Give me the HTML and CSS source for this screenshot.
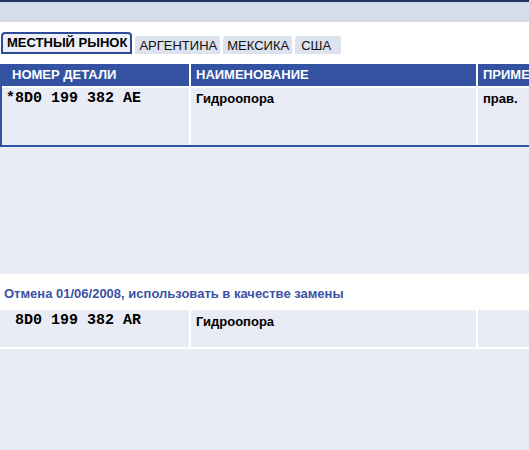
FILE: index.html
```html
<!DOCTYPE html>
<html lang="ru">
<head>
    <meta charset="UTF-8">
    <meta name="viewport" content="width=device-width, initial-scale=1.0">
    <title>Поиск деталей</title>
    <link rel="stylesheet" href="styles.css">
</head>
<body>
    <!-- Top band -->
    <div class="top-band"></div>

    <!-- Market tabs -->
    <nav class="tabs">
        <span class="tab active">МЕСТНЫЙ РЫНОК</span>
        <span class="tab">АРГЕНТИНА</span>
        <span class="tab">МЕКСИКА</span>
        <span class="tab last">США</span>
    </nav>

    <!-- Current part -->
    <div class="result">
        <div class="grid head">
            <div class="cell">НОМЕР ДЕТАЛИ</div>
            <div class="cell">НАИМЕНОВАНИЕ</div>
            <div class="cell">ПРИМЕ</div>
        </div>
        <div class="grid row tall">
            <div class="cell part">*8D0 199 382 AE</div>
            <div class="cell">Гидроопора</div>
            <div class="cell">прав.</div>
        </div>
    </div>

    <div class="filler"></div>

    <!-- Superseded part -->
    <div class="note">Отмена 01/06/2008, использовать в качестве замены</div>
    <div class="grid row">
        <div class="cell part">&nbsp;8D0 199 382 AR</div>
        <div class="cell">Гидроопора</div>
        <div class="cell"></div>
    </div>

    <div class="filler rest"></div>
</body>
</html>
```

FILE: styles.css
```css
* {
    box-sizing: border-box;
}

body {
    margin: 0;
    padding: 0;
    background: white;
    font-family: "Liberation Sans", Arial, sans-serif;
    font-size: 13px;
    overflow: hidden;
}

.top-band {
    height: 22px;
    border-top: 2px solid #24355f;
    background: #d5dcea;
}

.tabs {
    display: flex;
    align-items: flex-end;
    gap: 3px;
    padding: 10px 0 0 1px;
    height: 32px;
}

.tab {
    background: #dde2ef;
    color: #111;
    padding: 2px 3px 0 4px;
    height: 18px;
    line-height: 16px;
    border-radius: 2px 2px 0 0;
}

.tab.last {
    padding: 2px 10px 0 6px;
}

.tab.active {
    background: #eef0f7;
    border: 2px solid #2e4b99;
    border-radius: 4px 4px 0 0;
    padding: 0 3px 0 4px;
    height: 22px;
    line-height: 18px;
    font-weight: bold;
    color: #000;
}

.result {
    margin-top: 10px;
    border-left: 2px solid #3352a2;
    border-bottom: 2px solid #3352a2;
    display: flex;
    flex-direction: column;
    gap: 2px;
}

.grid {
    display: grid;
    grid-template-columns: 189px 285px 1fr;
    column-gap: 2px;
}

.result .grid {
    grid-template-columns: 187px 285px 1fr;
}

.head .cell {
    background: #3352a2;
    color: white;
    font-weight: bold;
    height: 22px;
    line-height: 22px;
    padding-left: 5px;
}

.head .cell:first-child {
    padding-left: 12px;
    margin-left: -2px;
}

.row .cell {
    background: #e9ecf5;
    font-weight: bold;
    color: #000;
    padding: 4px 5px 0;
    height: 37px;
}

.row.tall .cell {
    height: 57px;
    padding-top: 3px;
}

.row .cell.part {
    font-family: "Liberation Mono", "Courier New", monospace;
    font-size: 15px;
    padding: 2px 0 0 6px;
}

.result .row .cell.part {
    padding-left: 4px;
}

.filler {
    background: #e9ecf5;
    height: 127px;
}

.filler.rest {
    height: 120px;
    margin-top: 2px;
}

.note {
    height: 36px;
    line-height: 40px;
    padding-left: 4px;
    color: #3d52a5;
    font-weight: bold;
}
```
